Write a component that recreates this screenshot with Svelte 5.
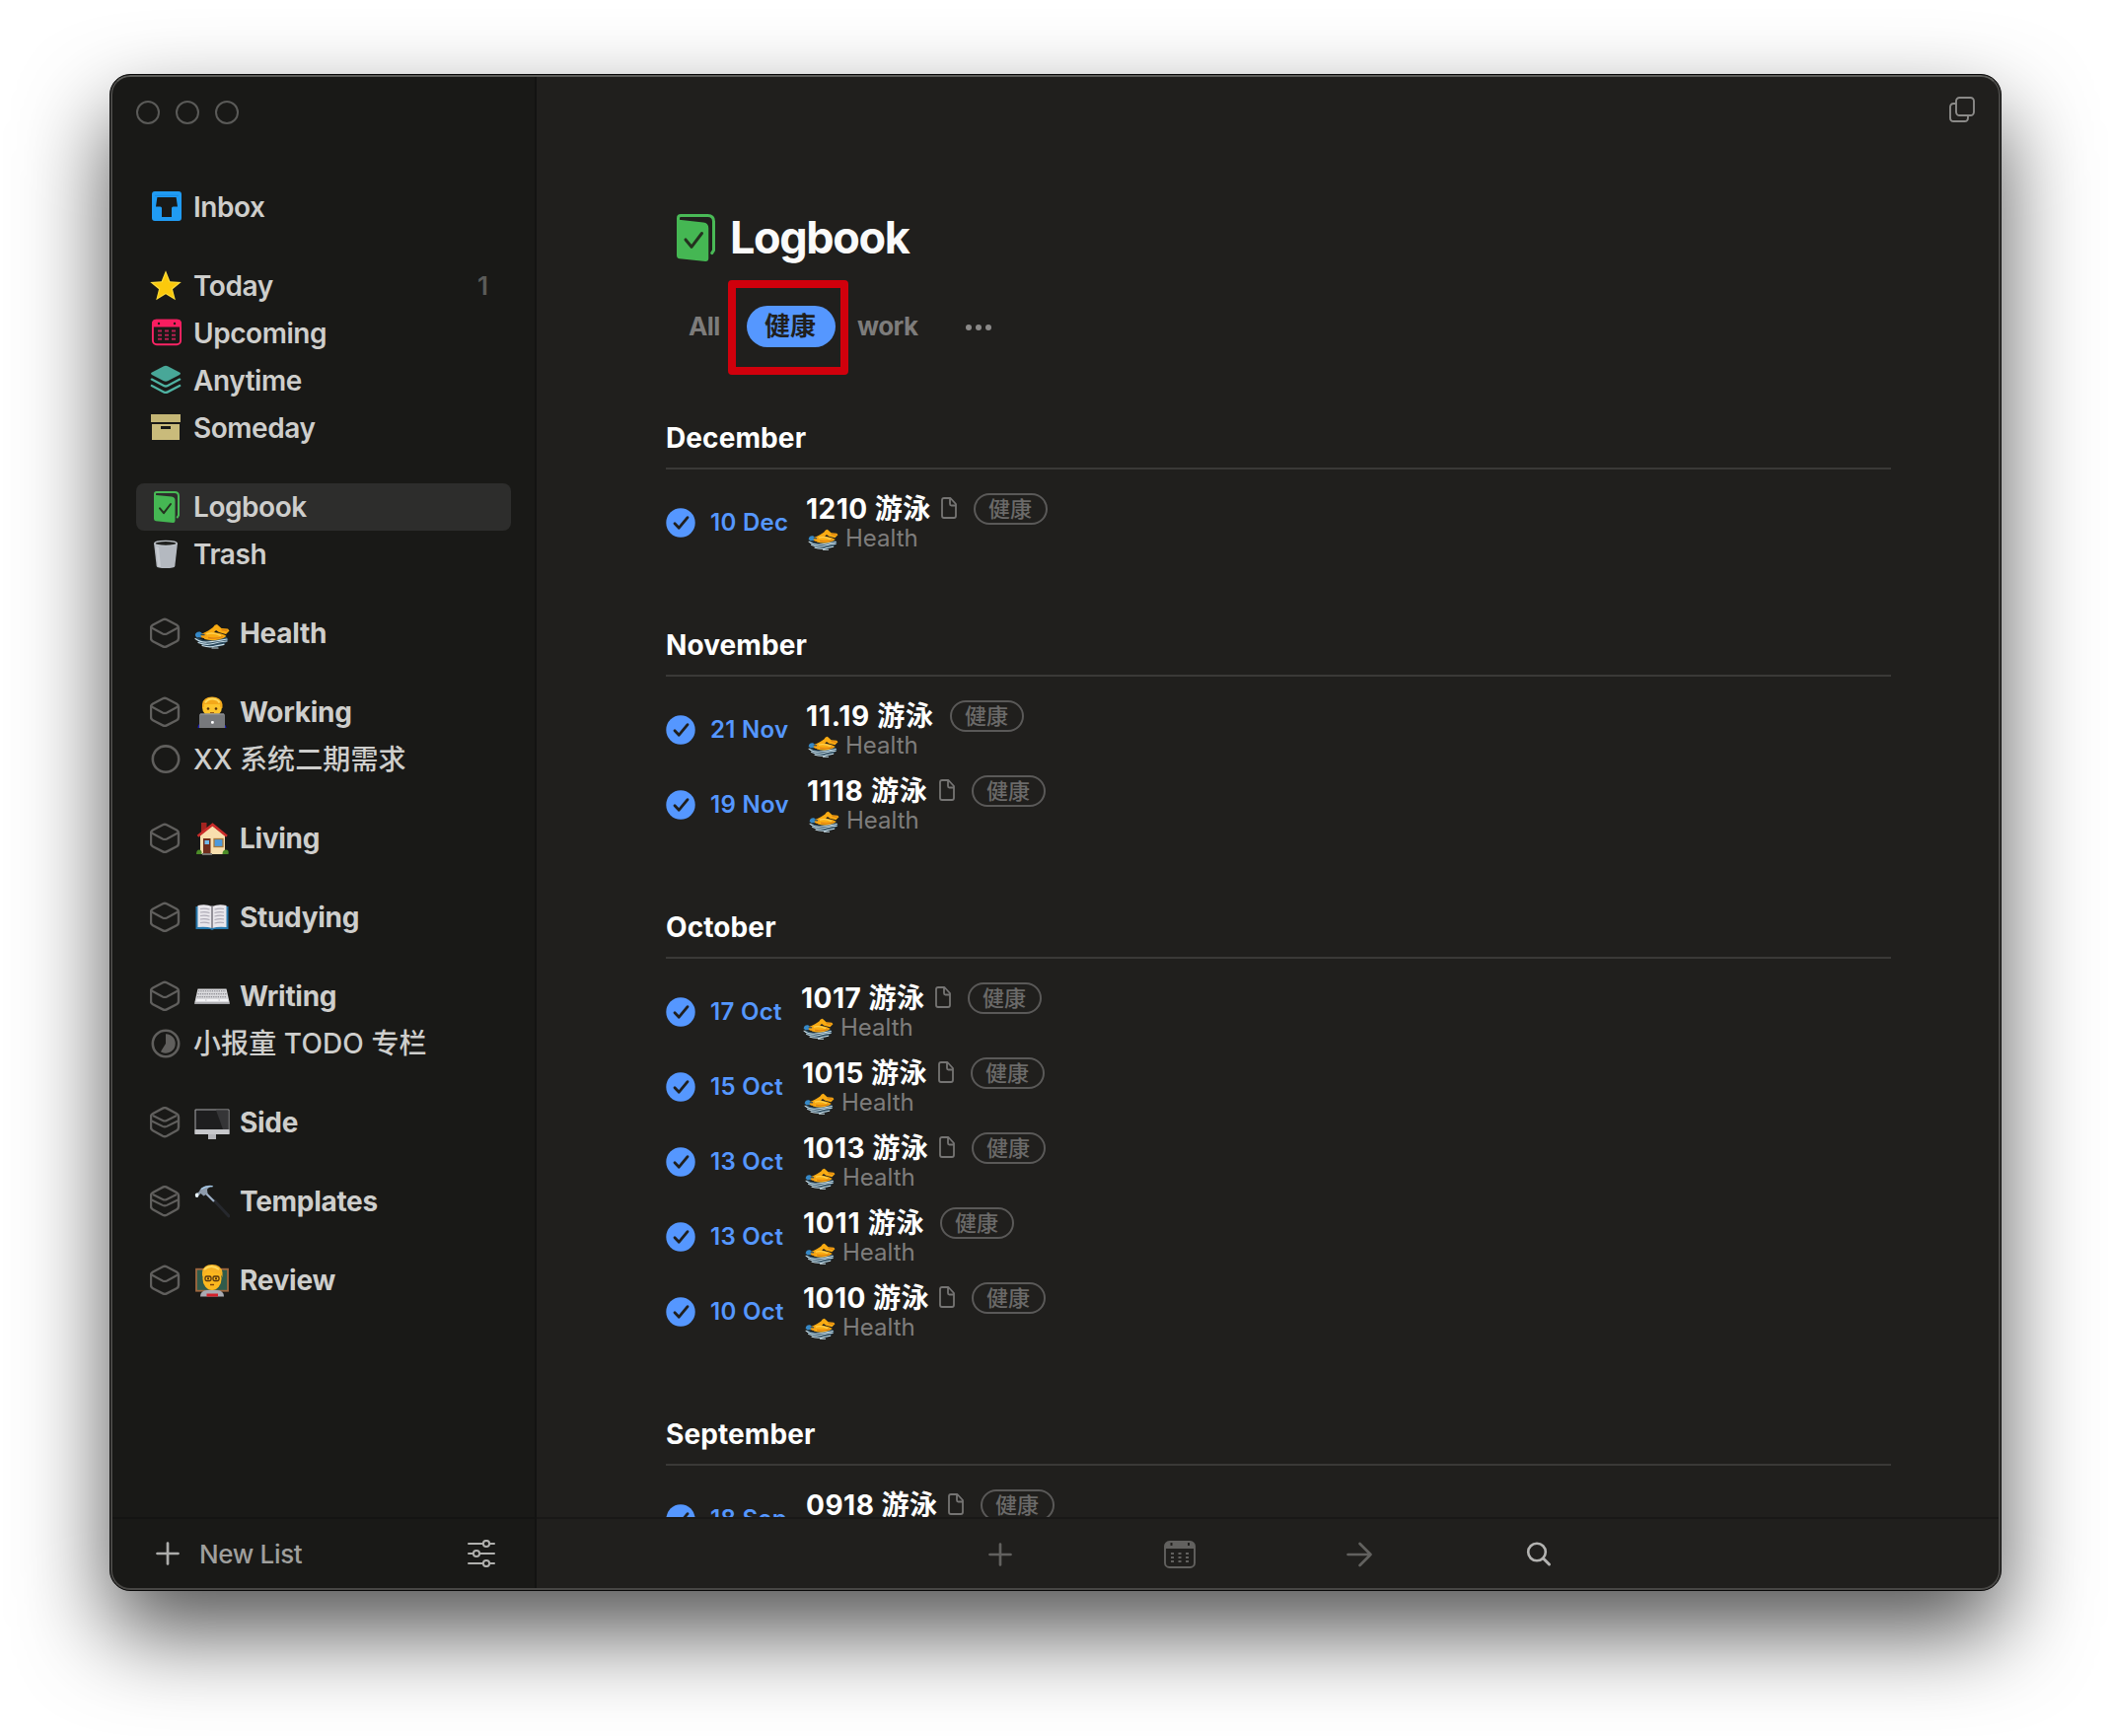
<script>
  const groups = [
    [{ icon: 'inbox', label: 'Inbox' }],
    [
      { icon: 'star', label: 'Today', count: 1 },
      { icon: 'calendar', label: 'Upcoming' },
      { icon: 'layers', label: 'Anytime' },
      { icon: 'drawer', label: 'Someday' }
    ],
    [
      { icon: 'logbook', label: 'Logbook', selected: true },
      { icon: 'trash', label: 'Trash' }
    ],
    [{ icon: 'area', emoji: 'swim', label: 'Health' }],
    [
      { icon: 'area', emoji: 'coder', label: 'Working' },
      { icon: 'project', label: 'XX 系统二期需求' }
    ],
    [{ icon: 'area', emoji: 'house', label: 'Living' }],
    [{ icon: 'area', emoji: 'book', label: 'Studying' }],
    [
      { icon: 'area', emoji: 'keyboard', label: 'Writing' },
      { icon: 'progress', label: '小报童 TODO 专栏' }
    ],
    [{ icon: 'areaFull', emoji: 'desktop', label: 'Side' }],
    [{ icon: 'areaFull', emoji: 'hammer', label: 'Templates' }],
    [{ icon: 'area', emoji: 'teacher', label: 'Review' }]
  ];

  // dateWidth and titleWidth are the measured columns of each entry;
  // tracking opens up titles made of narrow digits
  const months = [
    { name: 'December', entries: [{ date: '10 Dec', title: '1210 游泳', note: true, dateWidth: 97, titleWidth: 127, tracking: 0.5 }] },
    {
      name: 'November',
      entries: [
        { date: '21 Nov', title: '11.19 游泳', note: false, dateWidth: 97, titleWidth: 130, tracking: 0.75 },
        { date: '19 Nov', title: '1118 游泳', note: true, dateWidth: 98, titleWidth: 124, tracking: 0.8 }
      ]
    },
    {
      name: 'October',
      entries: [
        { date: '17 Oct', title: '1017 游泳', note: true, dateWidth: 92, titleWidth: 126, tracking: 0.5 },
        { date: '15 Oct', title: '1015 游泳', note: true, dateWidth: 93, titleWidth: 128, tracking: 0.5 },
        { date: '13 Oct', title: '1013 游泳', note: true, dateWidth: 94, titleWidth: 128, tracking: 0.5 },
        { date: '13 Oct', title: '1011 游泳', note: false, dateWidth: 94, titleWidth: 123, tracking: 0.8 },
        { date: '10 Oct', title: '1010 游泳', note: true, dateWidth: 94, titleWidth: 128, tracking: 0.5 }
      ]
    },
    { name: 'September', entries: [{ date: '18 Sep', title: '0918 游泳', note: true, dateWidth: 97, titleWidth: 134, tracking: 0.5 }] }
  ];
</script>

{#snippet logbook()}
  <svg class="fill" viewBox="0 0 26 32">
    <path d="M1 5V2.8Q1 1 2.8 1H21Q25 1 25 5v19.5l-1.2 1.9" fill="none" stroke="#49b956" stroke-width="2" stroke-linecap="round" />
    <path d="M0 3.7 18 5.6Q21.5 6 21.5 9.5V30q0 2-2 2L2 30.2Q0 30 0 28Z" fill="#45b753" />
    <path d="M6 17.3l4 4.9 7-9.2" fill="none" stroke="#24311f" stroke-width="2" stroke-linecap="round" stroke-linejoin="round" />
  </svg>
{/snippet}

{#snippet icon(name)}
  {#if name === 'logbook'}
    <span class="book-slot">{@render logbook()}</span>
  {:else}
    <svg class="icon" viewBox="0 0 32 32" fill="none">
      {#if name === 'inbox'}
        <path fill-rule="evenodd" fill="#209bf3" d="M5 0H29Q32 0 32 3V27q0 3-3 3H5q-3 0-3-3V3Q2 0 5 0ZM7.4 6 6 15.500h4.500q1.500 0 1.500 1.500V26h10V17q0-1.500 1.500-1.500H28L26.600 6Z" />
        <path d="M5 4.300h24" stroke="#1788e0" stroke-width="1" />
      {:else if name === 'star'}
        <path d="M16 .3 20.4 11.200 31.800 12 23 19.300 25.900 30.300 16 24.300 6.200 30.300 9 19.300.2 12l11.400-.8Z" fill="#fddc38" />
        <path d="M16 3.500 19.500 12.300 28.500 13 21.700 18.600 24.200 28 16 22.900 7.800 28l2.500-9.400L3.500 13l9-.7Z" fill="#fbc90c" />
      {:else if name === 'calendar'}
        <rect x="2.900" y="2.700" width="28.200" height="24.500" rx="4" stroke="#fa2566" stroke-width="1.900" />
        <path d="M2 9.500V6q0-4.300 4.300-4.300H27.700Q32 1.700 32 6v3.500Z" fill="#f91d60" />
        <circle cx="9" cy="6" r="1.200" fill="#191917" /><circle cx="25" cy="6" r="1.200" fill="#191917" />
        <g stroke="#b52150" stroke-width="2">
          <path d="M8 13.500h4m3 0h4m3 0h4M8 17.700h4m3 0h4m3 0h4M8 21.700h4m3 0h4m3 0h4" />
        </g>
      {:else if name === 'layers'}
        <path d="M14 1.200q2-.9 4 0L30 7.500q2 1.200 0 2.400l-12 6.300q-2 .9-4 0L2 9.900Q0 8.700 2 7.500Z" fill="#48a798" />
        <path d="M1.800 14.600 14 21q2 1 4 0l12.200-6.400M1.800 21 14 27.400q2 1 4 0L30.200 21" stroke="#4fb3a3" stroke-width="2.300" stroke-linecap="round" />
      {:else if name === 'drawer'}
        <path d="M1 2h30v8H1Z" fill="#c4b675" />
        <path fill-rule="evenodd" d="M2 12h28v16H2ZM11 14v3h10v-3Z" fill="#c9bb7b" />
      {:else if name === 'trash'}
        <path d="M4 4.500 6.700 28Q7 30 16 30t9.300-2L28 4.500Z" fill="#b4b9c0" />
        <path d="M6 8 8.200 28.500 11 29 9 9Z" fill="#c6cad0" />
        <ellipse cx="16" cy="4.900" rx="11.200" ry="2.500" fill="#20211f" stroke="#bcc2c8" stroke-width="1.400" />
      {:else if name === 'area'}
        <g stroke="#605f5d" stroke-width="2.400" stroke-linejoin="round">
          <path d="M13 2.300q2-1 4 0L27 7.500q2 1.100 2 3.200V21q0 2.200-2 3.200l-10 5.200q-2 1-4 0L3 24.200Q1 23.200 1 21V10.700Q1 8.600 3 7.500Z" />
          <path d="M1.800 10.500 12.800 16.500q2.200 1 4.400 0l11-6" stroke-width="2.100" />
        </g>
      {:else if name === 'areaFull'}
        <g stroke="#605f5d" stroke-width="2.400" stroke-linejoin="round">
          <path d="M13 1.600q2-1 4 0L27 7q2 1.100 2 3.200V21q0 2.200-2 3.200l-10 5.500q-2 1-4 0L3 24.200Q1 23.200 1 21V10.200Q1 8.100 3 7Z" />
          <path d="M3 9l10 5q2 1 4 0L27 9M1.800 14.500l11 5.400q2.200 1 4.400 0l11-5.400" stroke-width="2.100" />
        </g>
      {:else if name === 'project'}
        <circle cx="16" cy="15.600" r="13.200" stroke="#605f5d" stroke-width="2.600" />
      {:else if name === 'progress'}
        <circle cx="16" cy="16" r="13.200" stroke="#605f5d" stroke-width="2.600" />
        <path d="M16 16V6.300A9.700 9.700 0 1 1 10.900 24.200Z" fill="#605f5d" />
      {/if}
    </svg>
  {/if}
{/snippet}

{#snippet emoji(name)}
  <svg class="fill" viewBox="0 0 36 34" fill="none">
    {#if name === 'swim'}
      <path d="M2 20q5 5 13 4 10-3 18-3l1.500 3-5 5q-9 4-19 1Q2 27 2 20Z" fill="#2b495c" />
      <path d="M7 18 14 14.500l5-3.500Q20.500 8 23 8l4.500 4L34 12.500l1.500 2-3.500 3.500-7-2-3-2-2 2Q30 17.500 32.500 20q-3 2.500-8 3.500-8 1.500-14-.5Z" fill="#f9ab12" />
      <path d="M12 18q7-2.500 15 1.500" stroke="#ffd04d" stroke-width="1.400" />
      <path d="M27.500 13.500l6 1M14 21.500q8 1.500 15-1" stroke="#dd7f14" stroke-width="1.300" />
      <path d="M.8 19q.5-4 5-3.500l2.700 2-1.500 4-5-.5Z" fill="#3689c8" />
      <ellipse cx="9.800" cy="19.500" rx="3.200" ry="2.500" fill="#f7a313" />
      <path d="M6.500 18.500h4" stroke="#24485f" stroke-width="1.400" />
      <path d="M1 22.500q5 4 12 3.500t20-3M4 26.500q8 3 15 1t14-2.500M8 29.500q8 2.500 14 .3l8-1.500M18 32h6" stroke="#c9dfe9" stroke-width="1.200" stroke-linecap="round" />
    {:else if name === 'coder'}
      <path d="M3.500 33q0-5 5-5h18q5 0 6 5Z" fill="#1b1bb8" />
      <circle cx="18" cy="12" r="10" fill="#fdc42c" />
      <path d="M8 13V9q1-7.500 10-7.500T28.500 9v4L26 11.500V9H10v2.500Z" fill="#f4a91a" />
      <path d="M11 7.500Q14 3 19 3.500t6.500 4" stroke="#ffd95c" stroke-width="2" />
      <circle cx="14" cy="13.500" r="1.300" fill="#54300c" /><circle cx="22" cy="13.500" r="1.300" fill="#54300c" />
      <path d="M16 17.500h4" stroke="#9a5b16" />
      <path d="M5 20q0-1.500 1.500-1.500h23Q31 18.500 31 20v13H5Z" fill="#77797c" />
      <path d="M6 19h24" stroke="#999b9e" />
      <rect x="17" y="26" width="2.800" height="2.800" rx="1" fill="#fff" />
    {:else if name === 'house'}
      <path d="M7 1h5.500v8L7 13Z" fill="#a32420" />
      <path d="M6 14 18 4l13 10v19H6Z" fill="#f8dfae" />
      <path d="M3.500 14.800 18.500 3 33 14.800" stroke="#cb2c2a" stroke-width="2.600" />
      <path d="M9 17h7.500v15H9Z" fill="#702e1d" />
      <path d="M10.500 19h4.500v4h-4.500Z" fill="#72b9ea" />
      <rect x="20" y="17.500" width="9" height="8" fill="#4c9ade" stroke="#a8793b" stroke-width="1.300" />
      <path d="M8 33h10" stroke="#777572" stroke-width="2" />
      <path d="M2 33q0-4.500 3-4.500T7.500 33ZM28.500 33q0-4.500 3.500-4.500t2.500 4.500Z" fill="#4c8c28" />
    {:else if name === 'book'}
      <path d="M1.500 6H34.500V29H20l-2 1-2-1H1.500Z" fill="#2678ad" />
      <path d="M3.500 27V5q8-2 14.500 1v22q-6-2-14.500-1ZM32.500 27V5q-8-2-14.500 1v22q6-2 14.500-1Z" fill="#e8e6eb" />
      <path d="M18 5v23" stroke="#77757e" stroke-width="1.500" />
      <path d="M6 8.500q5-1 9.500.5M6 12q5-1 9.500.5M6 15.500q5-1 9.500.5M6 19q5-1 9.500.5M6 22.500q5-1 9.500.5M20.500 9q5-1.500 9.500-.5M20.500 12.500q5-1.500 9.500-.5M20.500 16q5-1.500 9.500-.5M20.500 19.500q5-1.500 9.500-.5M20.500 23q5-1.500 9.500-.5" stroke="#aeabb6" stroke-width="1.200" />
    {:else if name === 'keyboard'}
      <path d="M3.500 9.500h29L35.500 22.500V25H.5v-2.500Z" fill="#d9d9dc" />
      <path d="M.5 23.300h35V25H.5Z" fill="#a5a5a9" />
      <path d="M4 11.800h28M3.500 14.800h29M3 17.800h30" stroke="#77777d" stroke-width="1.100" stroke-dasharray="1.300 1" />
      <path d="M2.500 21h8.500m1.500 0h12m1.500 0h8" stroke="#f4f4f6" stroke-width="2" />
    {:else if name === 'desktop'}
      <rect x=".5" y="3.500" width="35" height="25.500" rx="1" fill="#a9a9ac" />
      <rect x="1.500" y="4.500" width="33" height="19.500" fill="#1e1e1f" />
      <path d="M22 4.500h12.500v19.500H29Z" fill="#353537" />
      <path d="M.5 24.300h35V29H.5Z" fill="#c7c8cb" />
      <path d="M14 29h8v5h-8Z" fill="#b4b5b9" />
    {:else if name === 'hammer'}
      <path d="M20 16 35 32" stroke="#26282d" stroke-width="3" stroke-linecap="round" />
      <path d="M10 7 20 17" stroke="#9fb0c6" stroke-width="2.200" />
      <path d="M1 10l4-3q1-4 6-5.500 5-1.500 8.500 0-5 .5-6.500 3.500l.5 4-4 2.500L6.500 9 3 12.500Z" fill="#8e9bab" />
      <path d="M7 4.500Q12 1 18.500 1.800" stroke="#a7cdee" stroke-width="1.400" />
      <ellipse cx="2.600" cy="10.800" rx="1.800" ry="2.200" fill="#e9f4fb" />
    {:else if name === 'teacher'}
      <rect x="2" y="5.700" width="32" height="22" fill="#315b4b" stroke="#a0683f" stroke-width="1.800" />
      <path d="M6 33.500q0-6 7-6.500h10q7 .5 7 6.500Z" fill="#a9abb3" />
      <ellipse cx="18" cy="15" rx="9.600" ry="12" fill="#fcb81f" />
      <path d="M8 14V9q1-8 10-8t10.500 8v5L26 10q-8 0-12-4-1 3.500-4.500 5Z" fill="#f6b223" />
      <path d="M10 6Q17 0 25 6" stroke="#ffd95d" stroke-width="2" />
      <rect x="11" y="13" width="6" height="4.500" rx="1.500" stroke="#54340e" stroke-width="1.300" />
      <rect x="19" y="13" width="6" height="4.500" rx="1.500" stroke="#54340e" stroke-width="1.300" />
      <circle cx="14" cy="15.200" r="1" fill="#3a2208" /><circle cx="22" cy="15.200" r="1" fill="#3a2208" />
      <path d="M16 21.500h4" stroke="#7c410c" stroke-width="1.400" />
      <path d="M12.500 30.500h11.500v3H12.500Z" fill="#d3202b" />
    {/if}
  </svg>
{/snippet}

<div class="desktop">
  <div class="window">
    <aside class="sidebar">
      <div class="lights"><i></i><i></i><i></i></div>
      <nav>
        {#each groups as group}
          <ul>
            {#each group as item}
              <li class:selected={item.selected}>
                {@render icon(item.icon)}
                {#if item.emoji}
                  <span class="emoji">{@render emoji(item.emoji)}</span>
                {/if}
                <span class="label" class:area={item.emoji} class:project={item.icon === 'project' || item.icon === 'progress'}>{item.label}</span>
                {#if item.count}<span class="count">{item.count}</span>{/if}
              </li>
            {/each}
          </ul>
        {/each}
      </nav>
      <footer>
        <svg class="plus" viewBox="0 0 24 24"><path d="M12 1.500v21M1.500 12h21" /></svg>
        <span class="new-list">New List</span>
        <svg class="sliders" viewBox="0 0 28 28" fill="none">
          <path d="M1 4h14.500m7 0H27M1 14h4.500m7 0H27M1 24h14.500m7 0H27" />
          <circle cx="19" cy="4" r="3.100" /><circle cx="9" cy="14" r="3.100" /><circle cx="19" cy="24" r="3.100" />
        </svg>
      </footer>
    </aside>

    <main>
      <div class="topbar">
        <svg viewBox="0 0 26 26" fill="none">
          <rect x="7" y="1" width="18" height="18" rx="3.500" />
          <path d="M7 7H4.500Q1 7 1 10.500v11Q1 25 4.500 25h11q3.500 0 3.500-3.500V19" />
        </svg>
      </div>
      <div class="scroll">
        <header>
          <span class="title-icon">{@render logbook()}</span>
          <h1>Logbook</h1>
        </header>
        <div class="filters">
          <span class="filter all">All</span>
          <span class="filter active">健康<i class="highlight"></i></span>
          <span class="filter">work</span>
          <span class="dots"><i></i><i></i><i></i></span>
        </div>
        {#each months as month}
          <section>
            <h2>{month.name}</h2>
            {#each month.entries as entry}
              <div class="entry">
                <svg class="check" viewBox="0 0 30 30" fill="none">
                  <circle cx="15" cy="15" r="14.700" fill="#5597ff" />
                  <path d="M9 15.700l4.300 4.500 8.700-10.500" stroke="#201f1d" stroke-width="2.800" stroke-linecap="round" stroke-linejoin="round" />
                </svg>
                <span class="date" style:width="{entry.dateWidth}px">{entry.date}</span>
                <div class="body">
                  <div class="line">
                    <span class="title" style:width="{entry.titleWidth}px" style:letter-spacing="{entry.tracking}px">{entry.title}</span>
                    {#if entry.note}
                      <svg class="note" viewBox="0 0 16 22" fill="none"><path d="M9.500 1H3Q1 1 1 3v16q0 2 2 2h10q2 0 2-2V7Zm-.5 0v6q0 1.500 1.500 1.500H15" /></svg>
                    {/if}
                    <span class="tag">健康</span>
                  </div>
                  <div class="parent"><span class="emoji">{@render emoji('swim')}</span>Health</div>
                </div>
              </div>
            {/each}
          </section>
        {/each}
      </div>
      <footer>
        <svg viewBox="0 0 32 32"><path d="M16 5.500v21M5.500 16h21" /></svg>
        <svg viewBox="0 0 32 32">
          <rect x="1" y="3" width="30" height="26" rx="4.500" stroke-width="1.900" />
          <path class="solid" d="M1 10V7.500Q1 3 5.500 3h21Q31 3 31 7.500V10Z" />
          <path d="M7.500 4v3m17.500-3v3" stroke="#201f1d" stroke-width="2" stroke-linecap="butt" />
          <path d="M7 15h3m4.500 0h3m4.500 0h3M7 19h3m4.500 0h3m4.500 0h3M7 23h3m4.500 0h3m4.500 0h3" stroke-width="2" stroke-linecap="butt" />
        </svg>
        <svg viewBox="0 0 32 32"><path d="M4.500 16h23M16.500 5 27.500 16l-11 11" /></svg>
        <svg class="lit" viewBox="0 0 32 32"><circle cx="14" cy="13.500" r="8.800" stroke-width="2.600" /><path d="M20.500 20 26.500 26" stroke-width="3" /></svg>
      </footer>
    </main>
  </div>
</div>

<style>
  :global(body) {
    background: #fff;
    overflow: hidden;
  }
  .desktop {
    box-sizing: border-box;
    width: 2140px;
    height: 1760px;
    padding: 75px 0 0 111px;
    background: #fff;
    font-family: Inter, 'Noto Sans CJK SC', sans-serif;
    -webkit-font-smoothing: antialiased;
  }
  ul, h1, h2 {
    margin: 0;
    padding: 0;
    list-style: none;
  }
  svg {
    display: block;
    flex: none;
  }
  .fill {
    width: 100%;
    height: 100%;
  }
  .window {
    position: relative;
    display: flex;
    width: 1916px;
    height: 1536px;
    border: 1px solid #080808;
    border-radius: 21px;
    overflow: hidden;
    background: #201f1d;
    box-shadow: 0 42px 90px rgba(0, 0, 0, 0.67);
  }
  .window::after {
    content: '';
    position: absolute;
    inset: 0;
    border: 2px solid #474644;
    border-top-color: #5b5b58;
    border-radius: 20px;
    pointer-events: none;
  }

  .sidebar {
    box-sizing: border-box;
    display: flex;
    flex-direction: column;
    width: 432px;
    background: #191917;
    border-right: 2px solid #131312;
  }
  .lights {
    display: flex;
    gap: 16px;
    padding: 26px 0 0 26px;
    height: 84px;
  }
  .lights i {
    box-sizing: border-box;
    width: 24px;
    height: 24px;
    border: 2px solid #5a5a58;
    border-radius: 50%;
  }
  nav {
    display: flex;
    flex: 1;
    flex-direction: column;
    gap: 32px;
    padding: 0 24px 0 26px;
  }
  li {
    display: flex;
    align-items: center;
    height: 48px;
    padding-left: 14px;
    border-radius: 8px;
  }
  .selected {
    background: #2d2d2c;
  }
  .icon {
    width: 32px;
    height: 32px;
  }
  .book-slot {
    width: 26px;
    height: 32px;
    padding: 0 2px 0 4px;
  }
  .label {
    flex: 1;
    margin-left: 12px;
    color: #cececc;
    font-size: 28px;
    font-weight: 600;
    letter-spacing: -0.45px;
    line-height: 48px;
    white-space: nowrap;
  }
  .label.area {
    margin-left: 10px;
    font-weight: 700;
    letter-spacing: -0.3px;
  }
  .label.project {
    font-weight: 500;
    letter-spacing: 0.1px;
  }
  li .emoji {
    width: 36px;
    height: 34px;
    margin-left: 13px;
  }
  .count {
    margin: -2px 23px 0 0;
    color: #5b5b59;
    font-size: 26px;
    font-weight: 600;
  }
  .sidebar footer {
    display: flex;
    align-items: center;
    box-sizing: border-box;
    height: 74px;
    padding: 0 40px 2px 46px;
    border-top: 2px solid #141413;
  }
  .plus {
    width: 24px;
    height: 24px;
    stroke: #adadab;
    stroke-width: 2.7;
    stroke-linecap: round;
  }
  .new-list {
    flex: 1;
    margin-left: 20px;
    color: #9f9f9d;
    font-size: 26px;
    font-weight: 500;
    letter-spacing: -0.35px;
  }
  .sliders {
    width: 28px;
    height: 28px;
    stroke: #b0b0ae;
    stroke-width: 2;
    stroke-linecap: round;
  }

  main {
    display: flex;
    flex: 1;
    flex-direction: column;
    min-width: 0;
    background: #201f1d;
  }
  .topbar {
    display: flex;
    justify-content: flex-end;
    height: 79px;
    padding: 22px 26px 0 0;
  }
  .topbar svg {
    width: 26px;
    height: 26px;
    stroke: #8b8a88;
    stroke-width: 1.9;
  }
  .scroll {
    flex: 1;
    min-height: 0;
    padding: 40px 111px 0 131px;
    overflow: hidden;
  }
  header {
    display: flex;
    align-items: center;
    height: 48px;
    padding-left: 11px;
  }
  .title-icon {
    width: 39px;
    height: 48px;
  }
  h1 {
    margin-left: 15px;
    color: #fafafa;
    font-size: 45px;
    font-weight: 700;
    letter-spacing: -1.4px;
    line-height: 58px;
  }
  .filters {
    display: flex;
    align-items: center;
    height: 42px;
    margin: 45px 0 76px;
    padding-left: 23px;
  }
  .filter {
    color: #7d7c7b;
    font-size: 26px;
    font-weight: 700;
    letter-spacing: -0.6px;
    line-height: 42px;
  }
  .filter.all {
    width: 32px;
  }
  .filter.active {
    position: relative;
    box-sizing: border-box;
    width: 90px;
    margin: 0 22px 0 27px;
    padding-right: 2px;
    border-radius: 21px;
    background: #5597ff;
    color: #201f1d;
    letter-spacing: 0;
    text-align: center;
  }
  .highlight {
    position: absolute;
    top: -26px;
    left: -19px;
    box-sizing: border-box;
    width: 122px;
    height: 96px;
    border: 8px solid #d0000c;
    border-radius: 4px;
  }
  .dots {
    display: flex;
    gap: 4px;
    margin: 2px 0 0 49px;
  }
  .dots i {
    width: 6px;
    height: 6px;
    border-radius: 50%;
    background: #8a8988;
  }
  section {
    margin-bottom: 70px;
  }
  h2 {
    height: 31px;
    padding: 1px 0 14px;
    margin-bottom: 16px;
    border-bottom: 2px solid #3a3937;
    color: #fff;
    font-size: 28px;
    font-weight: 700;
    letter-spacing: 0.1px;
    line-height: 31px;
  }
  .entry {
    display: flex;
    align-items: center;
    height: 76px;
  }
  .check {
    width: 30px;
    height: 30px;
  }
  .date {
    flex: none;
    margin: -2px 0 0 15px;
    color: #5597ff;
    font-size: 24px;
    font-weight: 600;
    letter-spacing: 0.3px;
    white-space: nowrap;
  }
  .body {
    padding-top: 2px;
  }
  .line {
    display: flex;
    align-items: center;
    height: 30px;
  }
  .title {
    flex: none;
    color: #fff;
    font-size: 28px;
    font-weight: 700;
    line-height: 30px;
    white-space: nowrap;
  }
  .note {
    width: 16px;
    height: 22px;
    margin: -3px 1px 0 10px;
    stroke: #757473;
    stroke-width: 1.8;
    stroke-linejoin: round;
  }
  .tag {
    box-sizing: border-box;
    width: 75px;
    height: 32px;
    margin: 0 0 0 16px;
    padding-right: 1px;
    border: 2px solid #5a5958;
    border-radius: 16px;
    color: #6b6a69;
    font-size: 22px;
    font-weight: 500;
    line-height: 28px;
    text-align: center;
  }
  .parent {
    display: flex;
    align-items: center;
    height: 30px;
    color: #7e7d7c;
    font-size: 24px;
    line-height: 30px;
  }
  .parent .emoji {
    width: 31px;
    height: 29px;
    margin: -3px 7px 0 2px;
  }
  main footer {
    display: flex;
    align-items: center;
    box-sizing: border-box;
    gap: 150px;
    height: 74px;
    padding: 0 0 1px 454px;
    border-top: 2px solid #191817;
  }
  main footer svg {
    width: 32px;
    height: 32px;
    fill: none;
    stroke: #62615f;
    stroke-width: 2.7;
    stroke-linecap: round;
    stroke-linejoin: round;
  }
  main footer .solid {
    fill: #62615f;
    stroke: none;
  }
  main footer .lit {
    stroke: #b3b3b1;
  }
</style>
